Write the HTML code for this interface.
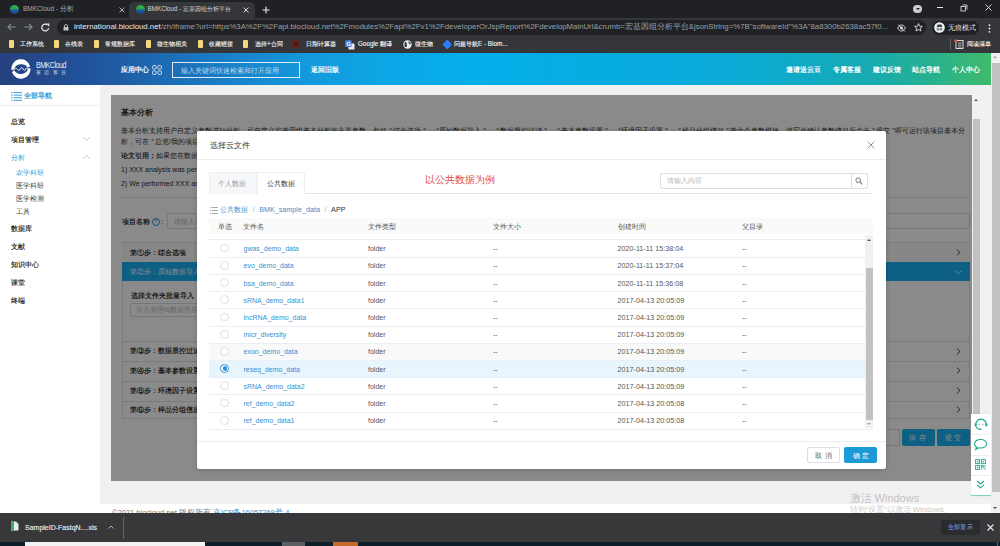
<!DOCTYPE html>
<html><head><meta charset="utf-8">
<style>
*{margin:0;padding:0;box-sizing:border-box}
html,body{width:1000px;height:546px;overflow:hidden;background:#f1f1f1;font-family:"Liberation Sans",sans-serif}
.a{position:absolute}
.t{position:absolute;white-space:nowrap;line-height:1}
#tabbar{left:0;top:0;width:1000px;height:18px;background:#202124}
#toolbar{left:0;top:18px;width:1000px;height:35px;background:#35363a}
#hdr{left:0;top:53px;width:991px;height:32px;background:linear-gradient(to right,#26417f 0%,#21519a 8%,#1d66ae 15%,#1a80c9 23%,#1499dc 31%,#0ca7e6 39%,#05aeea 48%,#07acdf 62%,#08aadc 70%,#0eaac8 80%,#17abb0 88%,#27b190 94%,#40bb6c 100%)}
#side{left:0;top:85px;width:100px;height:428px;background:#fff}
#card{left:111px;top:95px;width:861px;height:386px;background:#fff;overflow:hidden}
#ov{left:111px;top:95px;width:861px;height:386px;background:rgba(0,0,0,0.46)}
#footer{left:100px;top:504px;width:891px;height:9px;background:#fff}
#dl{left:0;top:513px;width:1000px;height:29px;background:#38383b}
#task{left:0;top:542px;width:1000px;height:4px;background:#0f1f2a}
.w{color:#fff}
</style></head><body>
<!-- browser tab bar -->
<div id="tabbar" class="a"></div>
<div class="a" style="left:129px;top:2px;width:126px;height:16px;background:#35363a;border-radius:5px 5px 0 0"></div>
<div id="toolbar" class="a"></div>

<!-- tab 1 -->
<div class="a" style="left:10px;top:5px;width:9px;height:9px;border-radius:50%;background:linear-gradient(#2aa84a 0%,#2aa84a 40%,#1e63a8 55%,#1a3f8a 100%)"></div>
<div class="t" style="left:23px;top:6px;font-size:6.5px;color:#a9adb1">BMKCloud - 分析</div>
<svg class="a" style="left:118.5px;top:6.5px" width="6" height="6" viewBox="0 0 6 6"><path d="M0.5 0.5 L5.5 5.5 M5.5 0.5 L0.5 5.5" stroke="#bdc1c6" stroke-width="0.9"/></svg>
<!-- tab 2 -->
<div class="a" style="left:136px;top:5px;width:9px;height:9px;border-radius:50%;background:linear-gradient(#2aa84a 0%,#2aa84a 40%,#1e63a8 55%,#1a3f8a 100%)"></div>
<div class="t" style="left:147.5px;top:6px;font-size:6.3px;color:#d5d8db">BMKCloud - 宏基因组分析平台</div>
<svg class="a" style="left:243px;top:6.5px" width="6" height="6" viewBox="0 0 6 6"><path d="M0.5 0.5 L5.5 5.5 M5.5 0.5 L0.5 5.5" stroke="#e8eaed" stroke-width="0.9"/></svg>
<svg class="a" style="left:261.5px;top:5.5px" width="8" height="8" viewBox="0 0 8 8"><path d="M4 0.5 V7.5 M0.5 4 H7.5" stroke="#e8eaed" stroke-width="1.1"/></svg>
<!-- window controls -->
<div class="a" style="left:913.3px;top:4.8px;width:8.6px;height:8.6px;border-radius:50%;background:#c9cbcd"></div>
<div class="a" style="left:915.6px;top:8px;width:0;height:0;border-left:2px solid transparent;border-right:2px solid transparent;border-top:2.4px solid #202124"></div>
<div class="a" style="left:937px;top:7px;width:6px;height:1px;background:#e8eaed"></div>
<svg class="a" style="left:960px;top:4px" width="8" height="8" viewBox="0 0 8 8"><path d="M2.5 1 H7 V5.5" fill="none" stroke="#e8eaed" stroke-width="0.8"/><rect x="1" y="2.5" width="4.5" height="4.5" fill="none" stroke="#e8eaed" stroke-width="0.8"/></svg>
<svg class="a" style="left:984.5px;top:4px" width="7" height="7" viewBox="0 0 7 7"><path d="M0.5 0.5 L6.5 6.5 M6.5 0.5 L0.5 6.5" stroke="#e8eaed" stroke-width="0.9"/></svg>
<!-- nav buttons -->
<svg class="a" style="left:7px;top:23px" width="9" height="8" viewBox="0 0 9 8"><path d="M8.5 4 H1.2 M4.2 0.8 L1 4 L4.2 7.2" fill="none" stroke="#8a8d91" stroke-width="1.2"/></svg>
<svg class="a" style="left:24px;top:23px" width="9" height="8" viewBox="0 0 9 8"><path d="M0.5 4 H7.8 M4.8 0.8 L8 4 L4.8 7.2" fill="none" stroke="#8a8d91" stroke-width="1.2"/></svg>
<svg class="a" style="left:41px;top:23px" width="9" height="9" viewBox="0 0 9 9"><path d="M7.6 5 A3.4 3.4 0 1 1 6.4 1.9" fill="none" stroke="#e8eaed" stroke-width="1.2"/><path d="M5.2 0.6 L8.3 0.6 L8.3 3.7 Z" fill="#e8eaed"/></svg>
<div class="a" style="left:57px;top:20px;width:869px;height:15px;border-radius:8px;background:#202124"></div>
<svg class="a" style="left:63px;top:24px" width="6" height="7" viewBox="0 0 6 7"><path d="M1.5 3 V2 A1.5 1.5 0 0 1 4.5 2 V3" fill="none" stroke="#bdc1c6" stroke-width="0.9"/><rect x="0.5" y="3" width="5" height="3.6" rx="0.5" fill="#bdc1c6"/></svg>
<div class="t" style="left:74px;top:23px;font-size:7.8px;color:#9aa0a6"><span style="color:#e8eaed">international.biocloud.net</span>/zh/iframe?url=https%3A%2F%2Fapi.biocloud.net%2Fmodules%2Fapi%2Fv1%2FdeveloperOrJspReport%2FdevelopMainUrl&amp;crumb=宏基因组分析平台&amp;jsonString=%7B"softwareId"%3A"8a8300b2638ac57f0...</div>
<svg class="a" style="left:896.5px;top:24px" width="9" height="8" viewBox="0 0 9 8"><path d="M0.6 4 C2 1.6 3.2 1 4.5 1 C5.8 1 7 1.6 8.4 4 C7 6.4 5.8 7 4.5 7 C3.2 7 2 6.4 0.6 4 Z" fill="none" stroke="#e8eaed" stroke-width="0.9"/><circle cx="4.5" cy="4" r="1.4" fill="#e8eaed"/><path d="M1.2 0.6 L7.8 7.4" stroke="#e8eaed" stroke-width="0.9"/></svg>
<svg class="a" style="left:914px;top:23px" width="9" height="9" viewBox="0 0 9 9"><path d="M4.5 0.6 L5.6 3.2 L8.4 3.4 L6.3 5.2 L7 8 L4.5 6.5 L2 8 L2.7 5.2 L0.6 3.4 L3.4 3.2 Z" fill="none" stroke="#e8eaed" stroke-width="0.85" stroke-linejoin="round"/></svg>
<div class="a" style="left:931.5px;top:20.5px;width:47px;height:14px;border-radius:7px;background:#202124"></div>
<svg class="a" style="left:933.5px;top:22.3px" width="11" height="11" viewBox="0 0 11 11"><circle cx="5.5" cy="5.5" r="5.3" fill="#f1f3f4"/><path d="M2.6 5 H8.4 L7.4 2.6 H3.6 Z" fill="#3c4043"/><circle cx="4" cy="7.2" r="1.1" fill="none" stroke="#3c4043" stroke-width="0.7"/><circle cx="7" cy="7.2" r="1.1" fill="none" stroke="#3c4043" stroke-width="0.7"/></svg>
<div class="t" style="left:948px;top:24.5px;font-size:6.6px;color:#f1f3f4">无痕模式</div>
<svg class="a" style="left:987.5px;top:23.5px" width="3" height="9" viewBox="0 0 3 9"><circle cx="1.5" cy="1.2" r="0.9" fill="#e8eaed"/><circle cx="1.5" cy="4.5" r="0.9" fill="#e8eaed"/><circle cx="1.5" cy="7.8" r="0.9" fill="#e8eaed"/></svg>
<!-- bookmarks -->
<div class="a" style="left:9px;top:40px;width:5px;height:8px;background:#f5d77b;border-radius:1px"></div>
<div class="t" style="left:20px;top:41px;font-size:6.3px;color:#f4f5f6;-webkit-text-stroke:0.12px #f4f5f6">工作系统</div>
<div class="a" style="left:54px;top:40px;width:5px;height:8px;background:#f5d77b;border-radius:1px"></div>
<div class="t" style="left:65px;top:41px;font-size:6.3px;color:#f4f5f6;-webkit-text-stroke:0.12px #f4f5f6">在线表</div>
<div class="a" style="left:94px;top:40px;width:5px;height:8px;background:#f5d77b;border-radius:1px"></div>
<div class="t" style="left:105px;top:41px;font-size:6.3px;color:#f4f5f6;-webkit-text-stroke:0.12px #f4f5f6">常规数据库</div>
<div class="a" style="left:146px;top:40px;width:5px;height:8px;background:#f5d77b;border-radius:1px"></div>
<div class="t" style="left:157px;top:41px;font-size:6.3px;color:#f4f5f6;-webkit-text-stroke:0.12px #f4f5f6">微生物相关</div>
<div class="a" style="left:198px;top:40px;width:5px;height:8px;background:#f5d77b;border-radius:1px"></div>
<div class="t" style="left:209px;top:41px;font-size:6.3px;color:#f4f5f6;-webkit-text-stroke:0.12px #f4f5f6">收藏链接</div>
<div class="a" style="left:243px;top:40px;width:5px;height:8px;background:#f5d77b;border-radius:1px"></div>
<div class="t" style="left:255px;top:41px;font-size:6.3px;color:#f4f5f6;-webkit-text-stroke:0.12px #f4f5f6">选择+合同</div>
<div class="a" style="left:292px;top:40px;width:8px;height:8px;background:#4d1c1c;border-radius:2px;border:1px solid #6b2525"></div>
<div class="t" style="left:306px;top:41px;font-size:6.3px;color:#f4f5f6;-webkit-text-stroke:0.12px #f4f5f6">日期计算器</div>
<svg class="a" style="left:345px;top:39.5px" width="10" height="10" viewBox="0 0 10 10"><rect x="3.5" y="3.5" width="6" height="6" rx="0.6" fill="#e8eaed"/><rect x="0.3" y="0.3" width="6.2" height="6.8" rx="0.6" fill="#4a86e8"/><text x="1.4" y="5.8" font-size="5.5" font-family="Liberation Sans" font-weight="bold" fill="#fff">G</text></svg>
<div class="t" style="left:358px;top:41px;font-size:6.3px;color:#f4f5f6;-webkit-text-stroke:0.12px #f4f5f6">Google 翻译</div>
<svg class="a" style="left:403px;top:40px" width="9" height="9" viewBox="0 0 9 9"><circle cx="4.5" cy="4.5" r="4.2" fill="#e8eaed"/><path d="M2 2.2 C3 1.8 4 2.6 3.6 3.6 C3.2 4.6 4.4 5 4 6.2 C3.7 7 2.4 7.2 1.8 6.4 C1.2 5.4 1.4 3 2 2.2 Z" fill="#35363a"/><path d="M5.5 1.2 C6.8 1.6 7.8 2.8 7.8 4.2 C7 4.4 6.2 3.8 5.8 3 C5.5 2.4 5.2 1.8 5.5 1.2 Z" fill="#35363a"/></svg>
<div class="t" style="left:415px;top:41px;font-size:6.3px;color:#f4f5f6;-webkit-text-stroke:0.12px #f4f5f6">微生物</div>
<div class="a" style="left:443.5px;top:40.8px;width:6.5px;height:6.5px;background:#2d7ff9;transform:rotate(45deg);border-radius:1px"></div>
<div class="t" style="left:454px;top:41px;font-size:6.3px;color:#f4f5f6;-webkit-text-stroke:0.12px #f4f5f6">问题导航E - Biom...</div>
<div class="a" style="left:950px;top:39px;width:1px;height:11px;background:#5f6368"></div>
<svg class="a" style="left:954px;top:39px" width="10" height="10" viewBox="0 0 10 10"><rect x="2" y="1.5" width="7" height="8" fill="none" stroke="#e8eaed" stroke-width="0.9"/><path d="M4 4 H7.5 M4 6 H7.5 M4 8 H7.5" stroke="#e8eaed" stroke-width="0.7"/><circle cx="1.8" cy="1.8" r="1.5" fill="#e35a4a"/></svg>
<div class="t" style="left:967px;top:41px;font-size:6.3px;color:#f4f5f6;-webkit-text-stroke:0.12px #f4f5f6">阅读清单</div>

<!-- site header -->
<div id="hdr" class="a"></div>

<svg class="a" style="left:10px;top:58px" width="22" height="22" viewBox="0 0 22 22">
<path d="M1.6 12.2 A9.5 9.5 0 0 1 20.2 8.4 L17.6 9.6 A7.2 6.2 0 0 0 4.2 11.2 Z" fill="#fff"/>
<path d="M20.4 10 A9.5 9.5 0 0 1 1.9 14 L4.4 12.6 A7.2 6.2 0 0 0 17.9 10.8 Z" fill="#fff"/>
<path d="M3.8 12.6 C5 10, 6.2 9.6, 7.4 11.4 C8.4 13, 9.4 12.8, 10.4 10.8 C11.3 9.2, 12.4 9.4, 13.2 11.2 C14 12.8, 15 12.8, 15.8 10.8 C16.6 9.2, 17.6 9.4, 18.6 11.6" fill="none" stroke="#fff" stroke-width="1" opacity="0.85"/>
</svg>
<div class="t" style="left:36px;top:62.3px;font-size:8.2px;color:rgba(255,255,255,0.92);letter-spacing:-0.55px;transform:scaleX(0.86);transform-origin:0 0">BMKCloud</div>
<div class="t" style="left:36px;top:70.8px;font-size:4.5px;color:rgba(255,255,255,0.85);letter-spacing:3.3px">百迈客云</div>
<div class="t" style="left:121px;top:66px;font-size:7.2px;color:#fff;font-weight:bold">应用中心</div>
<svg class="a" style="left:152px;top:65px" width="10" height="10" viewBox="0 0 10 10"><g fill="none" stroke="#fff" stroke-width="0.75"><rect x="0.6" y="0.6" width="3.5" height="3.5" rx="0.8"/><rect x="5.9" y="0.6" width="3.5" height="3.5" rx="0.8"/><rect x="0.6" y="5.9" width="3.5" height="3.5" rx="0.8"/><rect x="5.9" y="5.9" width="3.5" height="3.5" rx="0.8"/></g></svg>
<div class="a" style="left:172px;top:62px;width:128px;height:16px;border:1px solid rgba(255,255,255,0.85)"></div>
<div class="t" style="left:181px;top:66.5px;font-size:7px;color:rgba(255,255,255,0.7)">输入关键词快速检索和打开应用</div>
<div class="t" style="left:311px;top:66px;font-size:7.2px;color:#fff;font-weight:bold">返回旧版</div>
<div class="t" style="left:786px;top:66px;font-size:7.3px;color:#fff;font-weight:bold">邀请送云豆</div>
<div class="t" style="left:833px;top:66px;font-size:7.3px;color:#fff;font-weight:bold">专属客服</div>
<div class="t" style="left:872.5px;top:66px;font-size:7.3px;color:#fff;font-weight:bold">建议反馈</div>
<div class="t" style="left:911.5px;top:66px;font-size:7.3px;color:#fff;font-weight:bold">站点导航</div>
<div class="t" style="left:952px;top:66px;font-size:7.3px;color:#fff;font-weight:bold">个人中心</div>

<!-- sidebar -->
<div id="side" class="a"></div>

<svg class="a" style="left:10.5px;top:91.5px" width="11" height="9" viewBox="0 0 11 9"><g fill="#4aa8dc"><rect x="0" y="0" width="1.5" height="1.1"/><rect x="2.6" y="0" width="8.4" height="1.1"/><rect x="0" y="2.6" width="1.5" height="1.1"/><rect x="2.6" y="2.6" width="8.4" height="1.1"/><rect x="0" y="5.2" width="1.5" height="1.1"/><rect x="2.6" y="5.2" width="8.4" height="1.1"/><rect x="0" y="7.8" width="1.5" height="1.1"/><rect x="2.6" y="7.8" width="8.4" height="1.1"/></g></svg>
<div class="t" style="left:24px;top:92px;font-size:7.2px;color:#3a9fd8;font-weight:bold">全部导航</div>
<div class="a" style="left:0;top:105px;width:100px;height:1px;background:#eeeeee"></div>
<div class="t" style="left:10.7px;top:118.3px;font-size:7.2px;color:#111;font-weight:500;-webkit-text-stroke:0.15px #111">总览</div>
<div class="t" style="left:10.7px;top:136.2px;font-size:7.2px;color:#111;font-weight:500;-webkit-text-stroke:0.15px #111">项目管理</div>
<div class="t" style="left:10.7px;top:154.0px;font-size:7.2px;color:#2e95d6;font-weight:500">分析</div>
<div class="t" style="left:16.2px;top:169.0px;font-size:7.2px;color:#3aa2e0;">农学科研</div>
<div class="t" style="left:16.2px;top:181.9px;font-size:7.2px;color:#444;">医学科研</div>
<div class="t" style="left:16.2px;top:194.7px;font-size:7.2px;color:#444;">医学检测</div>
<div class="t" style="left:16.2px;top:207.9px;font-size:7.2px;color:#444;">工具</div>
<div class="t" style="left:10.7px;top:225.0px;font-size:7.2px;color:#111;font-weight:500;-webkit-text-stroke:0.15px #111">数据库</div>
<div class="t" style="left:10.7px;top:242.9px;font-size:7.2px;color:#111;font-weight:500;-webkit-text-stroke:0.15px #111">文献</div>
<div class="t" style="left:10.7px;top:261.4px;font-size:7.2px;color:#111;font-weight:500;-webkit-text-stroke:0.15px #111">知识中心</div>
<div class="t" style="left:10.7px;top:279.4px;font-size:7.2px;color:#111;font-weight:500;-webkit-text-stroke:0.15px #111">课堂</div>
<div class="t" style="left:10.7px;top:297.4px;font-size:7.2px;color:#111;font-weight:500;-webkit-text-stroke:0.15px #111">终端</div>
<svg class="a" style="left:83px;top:136.5px" width="7" height="4" viewBox="0 0 7 4"><path d="M0.3 0.3 L3.5 3.5 L6.7 0.3" stroke="#bbb" stroke-width="0.8" fill="none"/></svg>
<svg class="a" style="left:83px;top:155px" width="7" height="4" viewBox="0 0 7 4"><path d="M0.3 3.7 L3.5 0.5 L6.7 3.7" stroke="#bbb" stroke-width="0.8" fill="none"/></svg>

<!-- content card -->
<div id="card" class="a"></div>

<div class="t" style="left:121px;top:108.8px;font-size:8.2px;color:#333;font-weight:bold">基本分析</div>
<div class="t" style="left:121px;top:126.5px;font-size:7px;color:#2a2a2a">基本分析支持用户自定义参数进行分析，可自定义宏基因组基本分析的主要参数，包括<span style="letter-spacing:-1.2px">＂</span>综合选项<span style="letter-spacing:-1.2px">＂</span>、<span style="letter-spacing:-1.2px">＂</span>原始数据导入<span style="letter-spacing:-1.2px">＂</span>、<span style="letter-spacing:-1.2px">＂</span>数据质控过滤<span style="letter-spacing:-1.2px">＂</span>、<span style="letter-spacing:-1.2px">＂</span>基本参数设置<span style="letter-spacing:-1.2px">＂</span>、<span style="letter-spacing:-1.2px">＂</span>环境因子设置<span style="letter-spacing:-1.2px">＂</span>、<span style="letter-spacing:-1.2px">＂</span>样品分组信息<span style="letter-spacing:-1.2px">＂</span>等六个参数模块，填写并确认参数信息后点击<span style="letter-spacing:-1.2px">＂</span>提交<span style="letter-spacing:-1.2px">＂</span>即可运行该项目基本分</div>
<div class="t" style="left:121px;top:137.9px;font-size:7px;color:#2a2a2a">析，可在<span style="letter-spacing:-1.2px">＂</span>总览/我的项目<span style="letter-spacing:-1.2px">＂</span>中查看项目运行状态和结果。</div>
<div class="t" style="left:121px;top:151.5px;font-size:7px;color:#2a2a2a"><b style="color:#333">论文引用：</b>如果您在数据分析中使用了本平台，请在文章中引用：</div>
<div class="t" style="left:121px;top:165.9px;font-size:7px;color:#2a2a2a">1) XXX analysis was performed using BMKCloud (www.biocloud.net).</div>
<div class="t" style="left:121px;top:179.5px;font-size:7px;color:#2a2a2a">2) We performed XXX analysis using BMKCloud (www.biocloud.net).</div>
<div class="a" style="left:121px;top:197px;width:849px;height:1px;background:#e2e2e2"></div>
<div class="t" style="left:121.5px;top:218px;font-size:7.2px;color:#111;font-weight:500;-webkit-text-stroke:0.15px #111">项目名称</div>
<div class="a" style="left:152px;top:217.5px;width:8px;height:8px;border:1px solid #2e95d6;border-radius:50%"></div>
<div class="t" style="left:154.3px;top:219px;font-size:5.5px;color:#2e95d6">?</div>
<div class="t" style="left:161.5px;top:218px;font-size:7.2px;color:#333">:</div>
<div class="a" style="left:167px;top:213.3px;width:803px;height:16px;border:1px solid #dcdcdc;border-radius:2px"></div>
<div class="t" style="left:174px;top:218px;font-size:7px;color:#bbb">请输入项目名称</div>
<div class="a" style="left:121.8px;top:242px;width:848.2px;height:176.5px;border:1px solid #e2e2e2"></div>
<div class="a" style="left:122px;top:243px;width:848px;height:19px;background:#fafafa"></div>
<div class="t" style="left:129.7px;top:249px;font-size:7.2px;color:#111;font-weight:500;-webkit-text-stroke:0.15px #111">第①步：综合选项</div>
<div class="a" style="left:121.8px;top:262px;width:848.2px;height:19px;background:#19b0f4"></div>
<div class="t" style="left:129.7px;top:268px;font-size:7.2px;color:#fff">第②步：原始数据导入</div>
<div class="t" style="left:130.6px;top:291.8px;font-size:7.2px;color:#111;font-weight:500;-webkit-text-stroke:0.15px #111">选择文件夹批量导入：</div>
<div class="a" style="left:130px;top:302.5px;width:300px;height:14.5px;border:1px solid #dcdcdc;border-radius:2px"></div>
<div class="t" style="left:136px;top:306.5px;font-size:6.8px;color:#bbb">导入测序fq数据所在文件夹</div>
<div class="a" style="left:122px;top:341px;width:848px;height:1px;background:#e2e2e2"></div>
<div class="t" style="left:129.7px;top:347.4px;font-size:7.2px;color:#111;font-weight:500;-webkit-text-stroke:0.15px #111">第③步：数据质控过滤</div>
<svg class="a" style="left:956px;top:347.5px" width="5" height="7" viewBox="0 0 5 7"><path d="M0.8 0.5 L4 3.5 L0.8 6.5" stroke="#333" stroke-width="0.9" fill="none"/></svg>
<div class="a" style="left:122px;top:361px;width:848px;height:1px;background:#e2e2e2"></div>
<div class="t" style="left:129.7px;top:367.1px;font-size:7.2px;color:#111;font-weight:500;-webkit-text-stroke:0.15px #111">第④步：基本参数设置</div>
<svg class="a" style="left:956px;top:367.2px" width="5" height="7" viewBox="0 0 5 7"><path d="M0.8 0.5 L4 3.5 L0.8 6.5" stroke="#333" stroke-width="0.9" fill="none"/></svg>
<div class="a" style="left:122px;top:380.5px;width:848px;height:1px;background:#e2e2e2"></div>
<div class="t" style="left:129.7px;top:386.9px;font-size:7.2px;color:#111;font-weight:500;-webkit-text-stroke:0.15px #111">第⑤步：环境因子设置</div>
<svg class="a" style="left:956px;top:387.0px" width="5" height="7" viewBox="0 0 5 7"><path d="M0.8 0.5 L4 3.5 L0.8 6.5" stroke="#333" stroke-width="0.9" fill="none"/></svg>
<div class="a" style="left:122px;top:400.5px;width:848px;height:1px;background:#e2e2e2"></div>
<div class="t" style="left:129.7px;top:405.9px;font-size:7.2px;color:#111;font-weight:500;-webkit-text-stroke:0.15px #111">第⑥步：样品分组信息</div>
<svg class="a" style="left:956px;top:406.0px" width="5" height="7" viewBox="0 0 5 7"><path d="M0.8 0.5 L4 3.5 L0.8 6.5" stroke="#333" stroke-width="0.9" fill="none"/></svg>
<svg class="a" style="left:956px;top:249px" width="5" height="7" viewBox="0 0 5 7"><path d="M0.8 0.5 L4 3.5 L0.8 6.5" stroke="#333" stroke-width="0.9" fill="none"/></svg>
<svg class="a" style="left:955px;top:269.5px" width="7" height="5" viewBox="0 0 7 5"><path d="M0.5 0.8 L3.5 4 L6.5 0.8" stroke="#fff" stroke-width="0.9" fill="none"/></svg>
<div class="a" style="left:820px;top:429px;width:79.5px;height:16.5px;border:1px solid #dcdcdc;background:#fff"></div>
<div class="a" style="left:901.5px;top:429.3px;width:33.3px;height:16.4px;background:#19b0f4;border-radius:2px"></div>
<div class="t" style="left:909px;top:434px;font-size:7px;color:#fff;letter-spacing:2.5px">保存</div>
<div class="a" style="left:937.2px;top:429.3px;width:32.8px;height:16.4px;background:#19b0f4;border-radius:2px"></div>
<div class="t" style="left:944.5px;top:434px;font-size:7px;color:#fff;letter-spacing:2.5px">提交</div>
<div id="ov" class="a"></div>

<!-- modal -->
<div class="a" style="left:197px;top:131.4px;width:689px;height:337.6px;background:#fff;border-radius:2px;box-shadow:0 1px 4px rgba(0,0,0,0.2)"></div>
<div class="t" style="left:210px;top:141.8px;font-size:8.2px;color:#333">选择云文件</div>
<svg class="a" style="left:867px;top:141px" width="8" height="8" viewBox="0 0 8 8"><path d="M0.5 0.5 L7.5 7.5 M7.5 0.5 L0.5 7.5" stroke="#8a8a8a" stroke-width="0.9"/></svg>
<div class="a" style="left:197px;top:159px;width:689px;height:1px;background:#ececec"></div>
<div class="a" style="left:209px;top:193px;width:664px;height:1px;background:#e4e4e7"></div>
<div class="a" style="left:209px;top:172px;width:48px;height:21.5px;background:#f6f7f9;border:1px solid #f0f0f2;border-bottom:none"></div>
<div class="t" style="left:218px;top:179.5px;font-size:7.2px;color:#999">个人数据</div>
<div class="a" style="left:256.5px;top:172px;width:48px;height:22px;background:#fff;border:1px solid #f1f1f3;border-bottom:none"></div>
<div class="t" style="left:266.6px;top:179.5px;font-size:7.2px;color:#303133">公共数据</div>
<div class="t" style="left:425px;top:175px;font-size:10px;color:#e64b4b">以公共数据为例</div>
<div class="a" style="left:660px;top:172.6px;width:208px;height:16.2px;border:1px solid #dcdfe6;border-radius:2px"></div>
<div class="a" style="left:850.7px;top:172.6px;width:1px;height:16.2px;background:#dcdfe6"></div>
<div class="t" style="left:667px;top:177.5px;font-size:6.5px;color:#b8b8b8">请输入内容</div>
<svg class="a" style="left:855px;top:176.5px" width="8" height="8" viewBox="0 0 8 8"><circle cx="3.2" cy="3.2" r="2.3" stroke="#777" stroke-width="1" fill="none"/><path d="M4.9 4.9 L7.3 7.3" stroke="#777" stroke-width="1.2"/></svg>
<svg class="a" style="left:209.5px;top:206.5px" width="8" height="7" viewBox="0 0 8 7"><g fill="#a8a8a8"><rect x="0" y="0" width="1.2" height="1"/><rect x="2" y="0" width="6" height="1"/><rect x="0" y="3" width="1.2" height="1"/><rect x="2" y="3" width="6" height="1"/><rect x="0" y="6" width="1.2" height="1"/><rect x="2" y="6" width="6" height="1"/></g></svg>
<div class="t" style="left:220px;top:206.3px;font-size:7.2px;color:#3a8fd0">公共数据<span style="color:#b0b0b0;padding:0 4.6px">/</span>BMK_sample_data<span style="color:#b0b0b0;padding:0 4.6px">/</span><span style="color:#333">APP</span></div>
<div class="a" style="left:209.4px;top:217.8px;width:664px;height:16.5px;background:#fafafa;border-radius:2px"></div>
<div class="t" style="left:217.7px;top:223px;font-size:7px;color:#555">单选</div>
<div class="t" style="left:243.4px;top:223px;font-size:7px;color:#555">文件名</div>
<div class="t" style="left:367.8px;top:223px;font-size:7px;color:#555">文件类型</div>
<div class="t" style="left:493px;top:223px;font-size:7px;color:#555">文件大小</div>
<div class="t" style="left:617.5px;top:223px;font-size:7px;color:#555">创建时间</div>
<div class="t" style="left:742px;top:223px;font-size:7px;color:#555">父目录</div>
<div class="a" style="left:209.4px;top:239.40px;width:656px;height:1px;background:#ebeef5"></div>
<div class="a" style="left:220.4px;top:243.62px;width:8.8px;height:8.8px;border-radius:50%;background:#fff;border:1px solid #dcdfe6"></div>
<div class="t" style="left:243.5px;top:245.12px;font-size:7px;color:#3a8fd0">gwas_demo_data</div>
<div class="t" style="left:368px;top:245.12px;font-size:7px;color:#555">folder</div>
<div class="t" style="left:493px;top:245.12px;font-size:7px;color:#555">--</div>
<div class="t" style="left:617.5px;top:245.12px;font-size:7.2px;color:#555">2020-11-11 15:38:04</div>
<div class="t" style="left:742px;top:245.12px;font-size:7px;color:#555">--</div>
<div class="a" style="left:209.4px;top:256.63px;width:656px;height:1px;background:#ebeef5"></div>
<div class="a" style="left:220.4px;top:260.85px;width:8.8px;height:8.8px;border-radius:50%;background:#fff;border:1px solid #dcdfe6"></div>
<div class="t" style="left:243.5px;top:262.34px;font-size:7px;color:#3a8fd0">evo_demo_data</div>
<div class="t" style="left:368px;top:262.34px;font-size:7px;color:#555">folder</div>
<div class="t" style="left:493px;top:262.34px;font-size:7px;color:#555">--</div>
<div class="t" style="left:617.5px;top:262.34px;font-size:7.2px;color:#555">2020-11-11 15:37:04</div>
<div class="t" style="left:742px;top:262.34px;font-size:7px;color:#555">--</div>
<div class="a" style="left:209.4px;top:273.86px;width:656px;height:1px;background:#ebeef5"></div>
<div class="a" style="left:220.4px;top:278.08px;width:8.8px;height:8.8px;border-radius:50%;background:#fff;border:1px solid #dcdfe6"></div>
<div class="t" style="left:243.5px;top:279.58px;font-size:7px;color:#3a8fd0">bsa_demo_data</div>
<div class="t" style="left:368px;top:279.58px;font-size:7px;color:#555">folder</div>
<div class="t" style="left:493px;top:279.58px;font-size:7px;color:#555">--</div>
<div class="t" style="left:617.5px;top:279.58px;font-size:7.2px;color:#555">2020-11-11 15:36:08</div>
<div class="t" style="left:742px;top:279.58px;font-size:7px;color:#555">--</div>
<div class="a" style="left:209.4px;top:291.09px;width:656px;height:1px;background:#ebeef5"></div>
<div class="a" style="left:220.4px;top:295.31px;width:8.8px;height:8.8px;border-radius:50%;background:#fff;border:1px solid #dcdfe6"></div>
<div class="t" style="left:243.5px;top:296.81px;font-size:7px;color:#3a8fd0">sRNA_demo_data1</div>
<div class="t" style="left:368px;top:296.81px;font-size:7px;color:#555">folder</div>
<div class="t" style="left:493px;top:296.81px;font-size:7px;color:#555">--</div>
<div class="t" style="left:617.5px;top:296.81px;font-size:7.2px;color:#555">2017-04-13 20:05:09</div>
<div class="t" style="left:742px;top:296.81px;font-size:7px;color:#555">--</div>
<div class="a" style="left:209.4px;top:308.32px;width:656px;height:1px;background:#ebeef5"></div>
<div class="a" style="left:220.4px;top:312.54px;width:8.8px;height:8.8px;border-radius:50%;background:#fff;border:1px solid #dcdfe6"></div>
<div class="t" style="left:243.5px;top:314.03px;font-size:7px;color:#3a8fd0">lncRNA_demo_data</div>
<div class="t" style="left:368px;top:314.03px;font-size:7px;color:#555">folder</div>
<div class="t" style="left:493px;top:314.03px;font-size:7px;color:#555">--</div>
<div class="t" style="left:617.5px;top:314.03px;font-size:7.2px;color:#555">2017-04-13 20:05:09</div>
<div class="t" style="left:742px;top:314.03px;font-size:7px;color:#555">--</div>
<div class="a" style="left:209.4px;top:325.55px;width:656px;height:1px;background:#ebeef5"></div>
<div class="a" style="left:220.4px;top:329.77px;width:8.8px;height:8.8px;border-radius:50%;background:#fff;border:1px solid #dcdfe6"></div>
<div class="t" style="left:243.5px;top:331.26px;font-size:7px;color:#3a8fd0">micr_diversity</div>
<div class="t" style="left:368px;top:331.26px;font-size:7px;color:#555">folder</div>
<div class="t" style="left:493px;top:331.26px;font-size:7px;color:#555">--</div>
<div class="t" style="left:617.5px;top:331.26px;font-size:7.2px;color:#555">2017-04-13 20:05:09</div>
<div class="t" style="left:742px;top:331.26px;font-size:7px;color:#555">--</div>
<div class="a" style="left:209.4px;top:342.78px;width:656px;height:17.23px;background:#f9f9f9"></div>
<div class="a" style="left:209.4px;top:342.78px;width:656px;height:1px;background:#ebeef5"></div>
<div class="a" style="left:220.4px;top:347.00px;width:8.8px;height:8.8px;border-radius:50%;background:#fff;border:1px solid #dcdfe6"></div>
<div class="t" style="left:243.5px;top:348.49px;font-size:7px;color:#3a8fd0">exon_demo_data</div>
<div class="t" style="left:368px;top:348.49px;font-size:7px;color:#555">folder</div>
<div class="t" style="left:493px;top:348.49px;font-size:7px;color:#555">--</div>
<div class="t" style="left:617.5px;top:348.49px;font-size:7.2px;color:#555">2017-04-13 20:05:09</div>
<div class="t" style="left:742px;top:348.49px;font-size:7px;color:#555">--</div>
<div class="a" style="left:209.4px;top:360.01px;width:656px;height:17.23px;background:#e9f5fd"></div>
<div class="a" style="left:209.4px;top:360.01px;width:656px;height:1px;background:#ebeef5"></div>
<div class="a" style="left:220.4px;top:364.23px;width:8.8px;height:8.8px;border-radius:50%;background:#fff;border:1px solid #2b90d9"></div>
<div class="a" style="left:222.6px;top:366.43px;width:4.4px;height:4.4px;border-radius:50%;background:#2b90d9"></div>
<div class="t" style="left:243.5px;top:365.72px;font-size:7px;color:#3a8fd0">reseq_demo_data</div>
<div class="t" style="left:368px;top:365.72px;font-size:7px;color:#555">folder</div>
<div class="t" style="left:493px;top:365.72px;font-size:7px;color:#555">--</div>
<div class="t" style="left:617.5px;top:365.72px;font-size:7.2px;color:#555">2017-04-13 20:05:09</div>
<div class="t" style="left:742px;top:365.72px;font-size:7px;color:#555">--</div>
<div class="a" style="left:209.4px;top:377.24px;width:656px;height:1px;background:#ebeef5"></div>
<div class="a" style="left:220.4px;top:381.46px;width:8.8px;height:8.8px;border-radius:50%;background:#fff;border:1px solid #dcdfe6"></div>
<div class="t" style="left:243.5px;top:382.95px;font-size:7px;color:#3a8fd0">sRNA_demo_data2</div>
<div class="t" style="left:368px;top:382.95px;font-size:7px;color:#555">folder</div>
<div class="t" style="left:493px;top:382.95px;font-size:7px;color:#555">--</div>
<div class="t" style="left:617.5px;top:382.95px;font-size:7.2px;color:#555">2017-04-13 20:05:09</div>
<div class="t" style="left:742px;top:382.95px;font-size:7px;color:#555">--</div>
<div class="a" style="left:209.4px;top:394.47px;width:656px;height:1px;background:#ebeef5"></div>
<div class="a" style="left:220.4px;top:398.69px;width:8.8px;height:8.8px;border-radius:50%;background:#fff;border:1px solid #dcdfe6"></div>
<div class="t" style="left:243.5px;top:400.19px;font-size:7px;color:#3a8fd0">ref_demo_data2</div>
<div class="t" style="left:368px;top:400.19px;font-size:7px;color:#555">folder</div>
<div class="t" style="left:493px;top:400.19px;font-size:7px;color:#555">--</div>
<div class="t" style="left:617.5px;top:400.19px;font-size:7.2px;color:#555">2017-04-13 20:05:08</div>
<div class="t" style="left:742px;top:400.19px;font-size:7px;color:#555">--</div>
<div class="a" style="left:209.4px;top:411.70px;width:656px;height:1px;background:#ebeef5"></div>
<div class="a" style="left:220.4px;top:415.92px;width:8.8px;height:8.8px;border-radius:50%;background:#fff;border:1px solid #dcdfe6"></div>
<div class="t" style="left:243.5px;top:417.42px;font-size:7px;color:#3a8fd0">ref_demo_data1</div>
<div class="t" style="left:368px;top:417.42px;font-size:7px;color:#555">folder</div>
<div class="t" style="left:493px;top:417.42px;font-size:7px;color:#555">--</div>
<div class="t" style="left:617.5px;top:417.42px;font-size:7.2px;color:#555">2017-04-13 20:05:08</div>
<div class="t" style="left:742px;top:417.42px;font-size:7px;color:#555">--</div>
<div class="a" style="left:209.4px;top:428.5px;width:664px;height:1px;background:#ebeef5"></div>
<div class="a" style="left:865px;top:235.3px;width:8px;height:193.2px;background:#f1f1f1"></div>
<div class="a" style="left:865.5px;top:268.2px;width:7px;height:151.5px;background:#c1c1c1"></div>
<div class="a" style="left:866.9px;top:239.3px;width:0;height:0;border-left:2.1px solid transparent;border-right:2.1px solid transparent;border-bottom:2.5px solid #505050"></div>
<div class="a" style="left:866.9px;top:422.6px;width:0;height:0;border-left:2.1px solid transparent;border-right:2.1px solid transparent;border-top:2.5px solid #a3a3a3"></div>
<div class="a" style="left:197px;top:441px;width:689px;height:1px;background:#ececec"></div>
<div class="a" style="left:806.6px;top:447.4px;width:33.1px;height:16.1px;background:#fff;border:1px solid #dcdfe6;border-radius:2px"></div>
<div class="t" style="left:815px;top:451.8px;font-size:7.2px;color:#555;letter-spacing:2.6px">取消</div>
<div class="a" style="left:844.2px;top:447.4px;width:33px;height:16.1px;background:#1c9ad6;border-radius:2px"></div>
<div class="t" style="left:852.7px;top:451.8px;font-size:7.2px;color:#fff;letter-spacing:2.6px">确定</div>


<!-- inner iframe scrollbar -->
<div class="a" style="left:972px;top:95px;width:8px;height:386px;background:#f1f1f1"></div>
<div class="a" style="left:973px;top:118.8px;width:7px;height:362px;background:#c1c1c1"></div>
<div class="a" style="left:974.4px;top:99px;width:0;height:0;border-left:2.2px solid transparent;border-right:2.2px solid transparent;border-bottom:2.6px solid #505050"></div>
<!-- outer scrollbar -->
<div class="a" style="left:991px;top:53px;width:9px;height:460px;background:#f1f1f1"></div>
<div class="a" style="left:992.3px;top:62.5px;width:7.7px;height:429px;background:#c1c1c1"></div>
<div class="a" style="left:993.3px;top:56px;width:0;height:0;border-left:2.3px solid transparent;border-right:2.3px solid transparent;border-bottom:2.7px solid #a3a3a3"></div>
<div class="a" style="left:993.3px;top:506.5px;width:0;height:0;border-left:2.3px solid transparent;border-right:2.3px solid transparent;border-top:2.7px solid #505050"></div>
<!-- floating toolbar -->
<div class="a" style="left:970.5px;top:413.7px;width:20px;height:82.5px;background:#fff;border-bottom:1px solid #7fd3c0;box-shadow:0 0 2px rgba(0,0,0,0.08)"></div>
<div class="a" style="left:971px;top:434px;width:19px;height:1px;background:#eeeeee"></div>
<div class="a" style="left:971px;top:455px;width:19px;height:1px;background:#eeeeee"></div>
<div class="a" style="left:971px;top:475px;width:19px;height:1px;background:#eeeeee"></div>
<svg class="a" style="left:973.5px;top:416.5px" width="14" height="14" viewBox="0 0 14 14"><g fill="none" stroke="#1aa88a" stroke-width="1.15"><path d="M1.9 8.4 A5.2 5.2 0 1 1 12.1 8.4"/><path d="M2.2 9.6 C3 11.6 4.6 12.3 6.2 12.3"/></g><g fill="#1aa88a"><rect x="0.7" y="6.2" width="1.9" height="3.4" rx="0.8"/><rect x="11.4" y="6.2" width="1.9" height="3.4" rx="0.8"/><rect x="4.6" y="6.8" width="1.3" height="0.9"/><rect x="8.1" y="6.8" width="1.3" height="0.9"/><circle cx="6.6" cy="12.3" r="0.9"/></g></svg>
<svg class="a" style="left:973px;top:437px" width="15" height="15" viewBox="0 0 15 15"><path d="M7.5 2.5 C11 2.5 13.5 4.4 13.5 6.8 C13.5 9.2 11 11 7.5 11 C6.8 11 6 10.9 5.4 10.7 L2.8 12.5 L3.5 10 C2.2 9.2 1.5 8 1.5 6.8 C1.5 4.4 4 2.5 7.5 2.5 Z" fill="none" stroke="#1aa88a" stroke-width="1.1"/></svg>
<svg class="a" style="left:975px;top:459px" width="11" height="11" viewBox="0 0 11 11"><g fill="none" stroke="#1aa88a" stroke-width="0.9"><rect x="0.6" y="0.6" width="4" height="4"/><rect x="6.4" y="0.6" width="4" height="4"/><rect x="0.6" y="6.4" width="4" height="4"/></g><g fill="#1aa88a"><rect x="1.9" y="1.9" width="1.4" height="1.4"/><rect x="7.7" y="1.9" width="1.4" height="1.4"/><rect x="1.9" y="7.7" width="1.4" height="1.4"/><rect x="6.2" y="6.2" width="1.2" height="3"/><rect x="6.2" y="6.2" width="3" height="1.1"/><rect x="8.4" y="7.6" width="1.2" height="1.6"/><rect x="6.2" y="9.8" width="1.1" height="1.1"/><rect x="9.6" y="9.8" width="1.1" height="1.1"/><rect x="9.6" y="6.2" width="1.1" height="1.1"/></g></svg>
<svg class="a" style="left:976px;top:479.5px" width="9" height="9" viewBox="0 0 9 9"><path d="M1 1 L4.5 4 L8 1 M1 4.8 L4.5 7.8 L8 4.8" fill="none" stroke="#1aa88a" stroke-width="1.1"/></svg>
<!-- footer -->
<div id="footer" class="a"></div>
<!-- page footer text -->
<div class="t" style="left:112px;top:509.4px;font-size:7.5px;color:#777">©2021 biocloud.net 版权所有 <span style="color:#3a8fd0">京ICP备16057269号-4</span></div>
<!-- windows watermark -->
<div class="t" style="left:849.5px;top:492.5px;font-size:11px;color:rgba(150,150,150,0.55)">激活 Windows</div>
<div class="t" style="left:849.5px;top:506px;font-size:7.7px;color:rgba(150,150,150,0.55)">转到“设置”以激活 Windows。</div>
<div id="dl" class="a"></div>

<svg class="a" style="left:9.5px;top:521px" width="9" height="10" viewBox="0 0 9 10"><path d="M1 0.5 H6 L8.5 3 V9.5 H1 Z" fill="#e6efe9"/><path d="M1 0.5 H4 V9.5 H1 Z" fill="#3fae6a"/><path d="M6 0.5 V3 H8.5" fill="#b8d7c2"/></svg>
<div class="t" style="left:25px;top:523.5px;font-size:7px;color:#f1f3f4;-webkit-text-stroke:0.1px #f1f3f4">SampleID-FastqN....xls</div>
<svg class="a" style="left:108px;top:524.5px" width="6" height="4" viewBox="0 0 6 4"><path d="M0.5 3.5 L3 1 L5.5 3.5" fill="none" stroke="#bdc1c6" stroke-width="0.9"/></svg>
<div class="a" style="left:123px;top:517px;width:1px;height:22px;background:#5f6368"></div>
<div class="a" style="left:940.5px;top:520px;width:39.5px;height:14.5px;background:#2a2b2f;border-radius:2px"></div>
<div class="t" style="left:947.5px;top:524px;font-size:6.3px;letter-spacing:0.4px;color:#8ab4f8">全部显示</div>
<svg class="a" style="left:987px;top:523.5px" width="7" height="7" viewBox="0 0 7 7"><path d="M0.5 0.5 L6.5 6.5 M6.5 0.5 L0.5 6.5" stroke="#e8eaed" stroke-width="1.1"/></svg>
<div id="task" class="a"></div>

<div class="a" style="left:25px;top:542px;width:180px;height:4px;background:#f2f2f2"></div>
<div class="a" style="left:282px;top:542px;width:23px;height:4px;background:#5a5d61"></div>
<div class="a" style="left:333px;top:542px;width:25px;height:4px;background:#c46a2a"></div>
<div class="t" style="left:945px;top:544.6px;font-size:7px;color:#fff;font-weight:bold">11:50</div>
<div class="a" style="left:997px;top:542px;width:1px;height:4px;background:#5a646b"></div>
</body></html>
